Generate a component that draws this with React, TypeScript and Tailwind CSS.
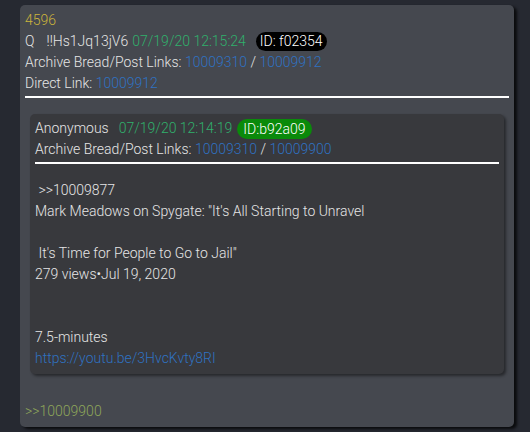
import React from "react";

export default function App() {
  const font = { fontFamily: "Roboto, 'Noto Sans', sans-serif" };
  return (
    <div
      className="w-[530px] h-[432px] bg-[#262931] overflow-hidden text-[14px] leading-[21px] font-light text-[#e6e6e6]"
      style={font}
    >
      <div className="ml-[20px] mt-[5px] w-[494px] h-[422px] bg-[#45484f] rounded-[5px] shadow-[3px_2px_3px_rgba(0,0,0,0.75)] px-[5px] pt-[5px]">
        <div className="text-[#cbb43c]">4596</div>
        <div className="flex items-center">
          <span>Q</span>
          <span className="ml-[12px]">!!Hs1Jq13jV6</span>
          <span className="ml-[4px] text-[#30b06c]">07/19/20 12:15:24</span>
          <span className="ml-[10px] bg-black text-white rounded-full px-[4px] h-[19px] leading-[19px]">ID: f02354</span>
        </div>
        <div>
          Archive Bread/Post Links:{" "}
          <span className="text-[#2f72c2]">10009310</span> /{" "}
          <span className="text-[#2f72c2]">10009912</span>
        </div>
        <div>
          Direct Link: <span className="text-[#2f72c2]">10009912</span>
        </div>
        <div className="mt-[2px] h-[2px] bg-white" />
        <div className="mt-[16px] mx-[5px] bg-[#38393d] rounded-[5px] shadow-[2px_2px_3px_rgba(0,0,0,0.45)] px-[5px] pt-[4px] pb-[5px]">
          <div className="flex items-center">
            <span>Anonymous</span>
            <span className="ml-[10px] text-[#30b06c]">07/19/20 12:14:19</span>
            <span className="ml-[5px] bg-[#0a8a0a] text-white rounded-full px-[6px] h-[20px] leading-[20px]">ID:b92a09</span>
          </div>
          <div>
            Archive Bread/Post Links:{" "}
            <span className="text-[#2f72c2]">10009310</span> /{" "}
            <span className="text-[#2f72c2]">10009900</span>
          </div>
          <div className="mt-[2px] h-[2px] bg-white" />
          <div className="mt-[16px]">
            <div>&nbsp;&gt;&gt;10009877</div>
            <div>Mark Meadows on Spygate: "It's All Starting to Unravel</div>
            <div>&nbsp;</div>
            <div>&nbsp;It's Time for People to Go to Jail"</div>
            <div>279 views•Jul 19, 2020</div>
            <div>&nbsp;</div>
            <div>&nbsp;</div>
            <div>7.5-minutes</div>
            <div className="text-[#2f72c2]">https://youtu.be/3HvcKvty8RI</div>
          </div>
        </div>
        <div className="mt-[27px] text-[#8ea65a]">&gt;&gt;10009900</div>
      </div>
    </div>
  );
}
